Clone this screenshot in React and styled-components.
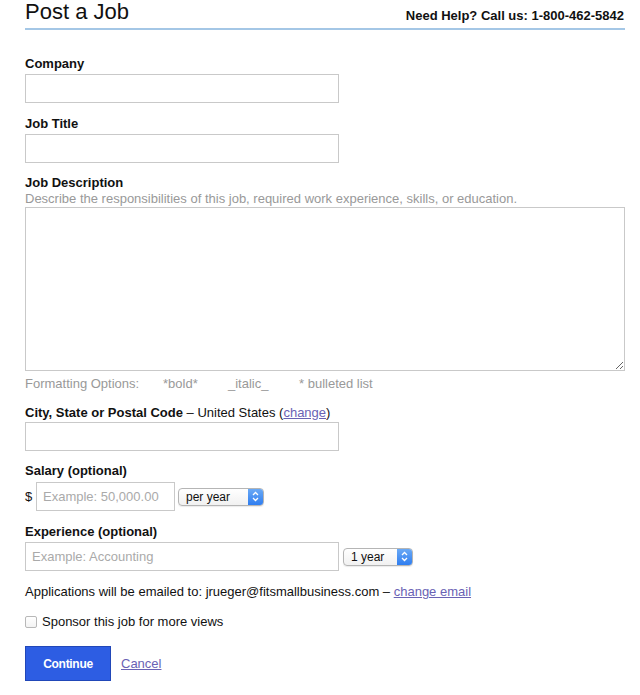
import React from "react";
import styled, { createGlobalStyle } from "styled-components";

const Global = createGlobalStyle`
  html, body { margin: 0; padding: 0; background: #fff; }
  body { font-family: "Liberation Sans", Arial, Helvetica, sans-serif; color: #111; }
  * { box-sizing: border-box; }
`;

const Page = styled.div`
  width: 600px;
  margin-left: 25px;
  font-size: 13px;
  line-height: 16px;
`;

const Header = styled.header`
  display: flex;
  justify-content: space-between;
  align-items: flex-end;
  height: 30px;
  padding-bottom: 5px;
  border-bottom: 2px solid #a4c7e6;
`;

const Title = styled.h1`
  margin: 0;
  font-size: 22px;
  line-height: 22px;
  font-weight: normal;
  color: #111;
`;

const Help = styled.div`
  font-weight: bold;
  font-size: 13px;
  line-height: 14px;
  color: #111;
  margin-right: 1px;
`;

const Form = styled.form`
  display: flex;
  flex-direction: column;
  padding-top: 26px;
`;

const Group = styled.div`
  display: flex;
  flex-direction: column;
  align-items: flex-start;
  margin-bottom: ${(p) => p.$mb ?? 12}px;
`;

const Label = styled.label`
  font-weight: bold;
  color: #111;
  margin-bottom: ${(p) => p.$mb ?? 2}px;
`;

const Plain = styled.span`
  font-weight: normal;
`;

const Hint = styled.div`
  color: #999;
  line-height: 16px;
`;

const TextInput = styled.input`
  width: ${(p) => p.$w}px;
  height: 29px;
  border: 1px solid #c9c9c9;
  border-radius: 0;
  padding: 0 6px;
  font-family: inherit;
  font-size: 13px;
  color: #333;
  background: #fff;
  outline: none;
  &::placeholder { color: #aaa; }
`;

const TextArea = styled.textarea`
  width: 600px;
  height: 164px;
  border: 1px solid #c9c9c9;
  border-radius: 0;
  font-family: inherit;
  font-size: 13px;
  resize: vertical;
  display: block;
  outline: none;
`;

const FormatRow = styled.div`
  display: flex;
  color: #999;
  margin-top: 5px;
  margin-bottom: 13px;
`;

const FormatItem = styled.span`
  width: ${(p) => p.$w}px;
`;

const Row = styled.div`
  display: flex;
  align-items: center;
  gap: ${(p) => p.$gap ?? 4}px;
`;

const Currency = styled.span`
  width: 8px;
  color: #111;
`;

const SelectBox = styled.div`
  position: relative;
  width: ${(p) => p.$w}px;
  height: 18px;
  border: 1px solid #b5b5b5;
  border-radius: 4px;
  background: linear-gradient(#ffffff, #f1f1f1);
  display: flex;
  align-items: center;
  padding-left: 7px;
  font-size: 12px;
  color: #111;
  overflow: hidden;
  box-shadow: 0 1px 1px rgba(0,0,0,0.08);
`;

const SelectCap = styled.span`
  position: absolute;
  right: 0;
  top: 0;
  bottom: 0;
  width: 15px;
  background: linear-gradient(#6aa9f5, #2f7ef0);
  display: flex;
  align-items: center;
  justify-content: center;
`;

const Select = ({ w, children }) => (
  <SelectBox $w={w}>
    {children}
    <SelectCap>
      <svg width="7" height="11" viewBox="0 0 7 11">
        <path d="M1 4 L3.5 1.5 L6 4 M1 7 L3.5 9.5 L6 7" fill="none" stroke="#fff" strokeWidth="1.3" />
      </svg>
    </SelectCap>
  </SelectBox>
);

const Text = styled.div`
  color: #111;
  margin-bottom: ${(p) => p.$mb ?? 0}px;
`;

const Link = styled.a`
  color: #6a62b4;
  text-decoration: underline;
  cursor: pointer;
`;

const CheckRow = styled.label`
  display: flex;
  align-items: center;
  gap: 5px;
  color: #111;
  margin-bottom: 16px;
`;

const Check = styled.span`
  width: 12px;
  height: 12px;
  border: 1px solid #b8b8b8;
  border-radius: 2px;
  background: linear-gradient(#fff, #f3f3f3);
`;

const Actions = styled.div`
  display: flex;
  align-items: center;
  gap: 10px;
`;

const Button = styled.button`
  width: 86px;
  height: 35px;
  background: #2d5de3;
  border: 1px solid #2147b8;
  color: #fff;
  font-family: inherit;
  font-weight: bold;
  font-size: 12px;
  letter-spacing: -0.3px;
  cursor: pointer;
  padding: 0;
`;

export default function App() {
  return (
    <>
      <Global />
      <Page>
        <Header>
          <Title>Post a Job</Title>
          <Help>Need Help? Call us: 1-800-462-5842</Help>
        </Header>
        <Form onSubmit={(e) => e.preventDefault()}>
          <Group $mb={13}>
            <Label>Company</Label>
            <TextInput $w={314} />
          </Group>
          <Group>
            <Label>Job Title</Label>
            <TextInput $w={314} />
          </Group>
          <Group $mb={0}>
            <Label $mb={0}>Job Description</Label>
            <Hint>Describe the responsibilities of this job, required work experience, skills, or education.</Hint>
            <TextArea />
          </Group>
          <FormatRow>
            <FormatItem $w={138}>Formatting Options:</FormatItem>
            <FormatItem $w={65}>*bold*</FormatItem>
            <FormatItem $w={71}>_italic_</FormatItem>
            <FormatItem>* bulleted list</FormatItem>
          </FormatRow>
          <Group $mb={12}>
            <Label $mb={1}>
              City, State or Postal Code <Plain>– United States (<Link>change</Link>)</Plain>
            </Label>
            <TextInput $w={314} />
          </Group>
          <Group $mb={13}>
            <Label $mb={3}>Salary (optional)</Label>
            <Row $gap={3}>
              <Currency>$</Currency>
              <TextInput $w={139} placeholder="Example: 50,000.00" />
              <Select w={86}>per year</Select>
            </Row>
          </Group>
          <Group $mb={13}>
            <Label $mb={2}>Experience (optional)</Label>
            <Row $gap={4}>
              <TextInput $w={314} placeholder="Example: Accounting" />
              <Select w={70}>1 year</Select>
            </Row>
          </Group>
          <Text $mb={14}>
            Applications will be emailed to: jrueger@fitsmallbusiness.com – <Link>change email</Link>
          </Text>
          <CheckRow>
            <Check />
            Sponsor this job for more views
          </CheckRow>
          <Actions>
            <Button type="button">Continue</Button>
            <Link>Cancel</Link>
          </Actions>
        </Form>
      </Page>
    </>
  );
}
